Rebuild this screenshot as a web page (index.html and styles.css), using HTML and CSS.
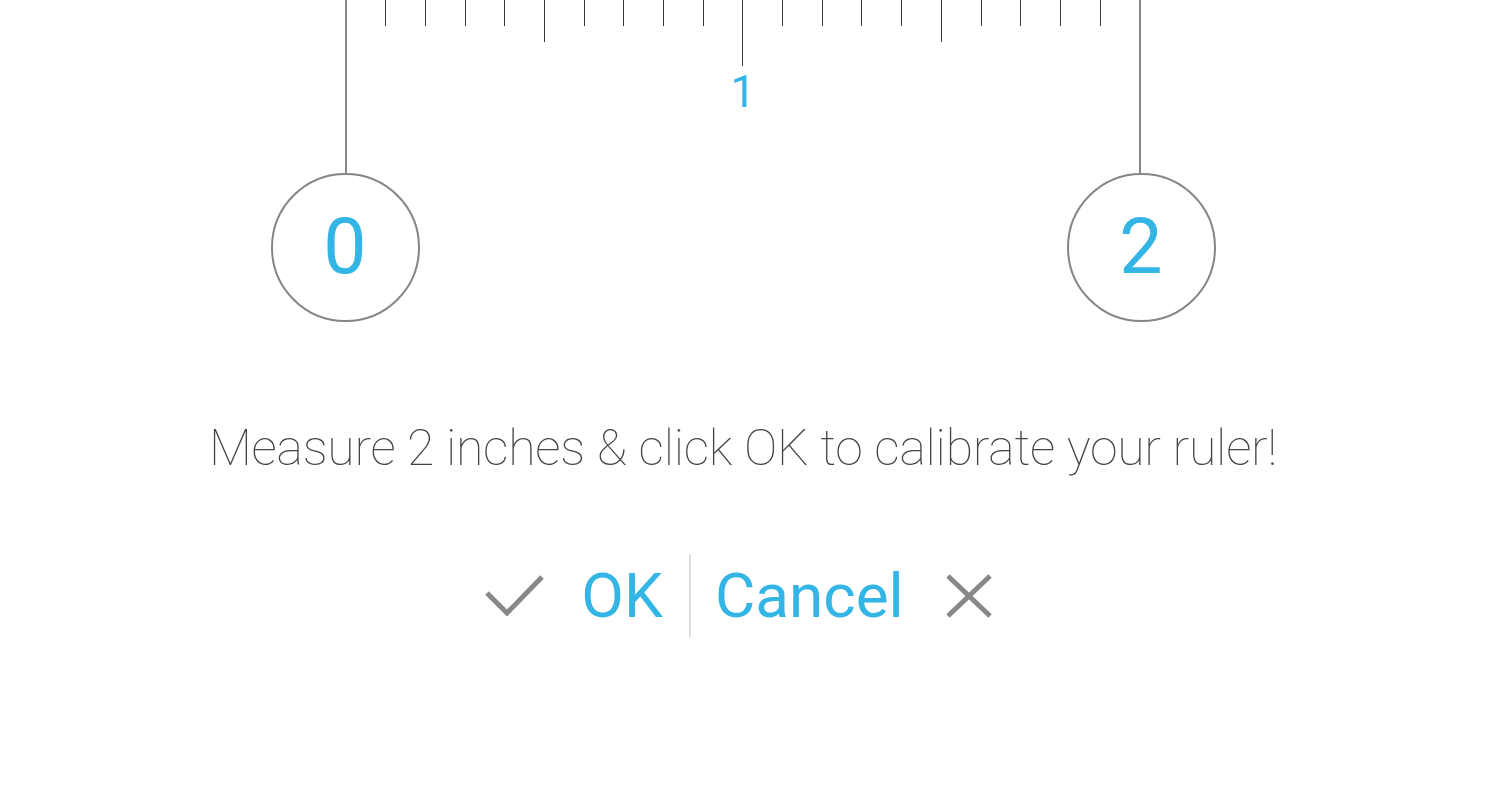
FILE: index.html
```html
<!DOCTYPE html>
<html>
<head>
    <meta charset="UTF-8">
    <title>Calibrate ruler</title>
    <link rel="stylesheet" href="styles.css">
</head>
<body>
    <div class="ruler">
        <span class="edge"></span>
        <span class="tick"></span>
        <span class="tick"></span>
        <span class="tick"></span>
        <span class="tick"></span>
        <span class="tick half"></span>
        <span class="tick"></span>
        <span class="tick"></span>
        <span class="tick"></span>
        <span class="tick"></span>
        <span class="tick inch"><span class="inch-label">1</span></span>
        <span class="tick"></span>
        <span class="tick"></span>
        <span class="tick"></span>
        <span class="tick"></span>
        <span class="tick half"></span>
        <span class="tick"></span>
        <span class="tick"></span>
        <span class="tick"></span>
        <span class="tick"></span>
        <span class="edge"></span>
    </div>
    <div class="handles">
        <div class="handle">0</div>
        <div class="handle">2</div>
    </div>
    <p class="hint">Measure 2 inches &amp; click OK to calibrate your ruler!</p>
    <div class="actions">
        <button type="button" class="action ok">
            <svg class="icon check" width="60" height="46" viewBox="0 0 60 46">
                <path d="M3 20 L23 40 L58 4" fill="none" stroke="#888888" stroke-width="5"/>
            </svg>
            <span>OK</span>
        </button>
        <span class="divider"></span>
        <button type="button" class="action cancel">
            <span>Cancel</span>
            <svg class="icon cross" width="48" height="46" viewBox="0 0 48 46">
                <path d="M3 3 L45 43 M45 3 L3 43" fill="none" stroke="#888888" stroke-width="5"/>
            </svg>
        </button>
    </div>
</body>
</html>
```

FILE: styles.css
```css
body {
    margin: 0;
    background-color: #ffffff;
    font-family: Roboto, "Liberation Sans", sans-serif;
}

.ruler {
    width: 797px;
    height: 173px;
    margin: 0 auto;
    display: flex;
    justify-content: space-between;
    align-items: flex-start;
}
.edge {
    width: 2px;
    height: 173px;
    background-color: #868686;
}
.tick {
    position: relative;
    width: 1px;
    height: 26px;
    background-color: #3a3a3a;
}
.tick.half {
    height: 42px;
}
.tick.inch {
    height: 66px;
}
.inch-label {
    position: absolute;
    top: 70px;
    left: -20px;
    width: 41px;
    text-align: center;
    color: #33b5e5;
    font-size: 44px;
    line-height: 44px;
}

.handles {
    width: 945px;
    margin: 0 auto;
    display: flex;
    justify-content: space-between;
}
.handle {
    width: 145px;
    height: 145px;
    border: 2.5px solid #868686;
    border-radius: 50%;
    display: flex;
    align-items: center;
    justify-content: center;
    color: #33b5e5;
    font-size: 77px;
    line-height: 1;
}

.hint {
    margin: 96px 0 0;
    text-align: center;
    color: #444444;
    font-size: 50px;
    font-weight: 100;
    letter-spacing: -0.25px;
    line-height: 60px;
}

.actions {
    margin-top: 76px;
    display: flex;
    justify-content: center;
    align-items: center;
    padding-right: 9px;
}
.action {
    display: flex;
    align-items: center;
    border: none;
    background: none;
    padding: 0;
    color: #33b5e5;
    font-family: Roboto, "Liberation Sans", sans-serif;
    font-size: 62px;
    line-height: 83px;
}
.ok {
    gap: 37px;
}
.cancel {
    gap: 41px;
}
.divider {
    width: 2px;
    height: 83px;
    margin: 0 24px 0 26px;
    background-color: #dddddd;
}
```
